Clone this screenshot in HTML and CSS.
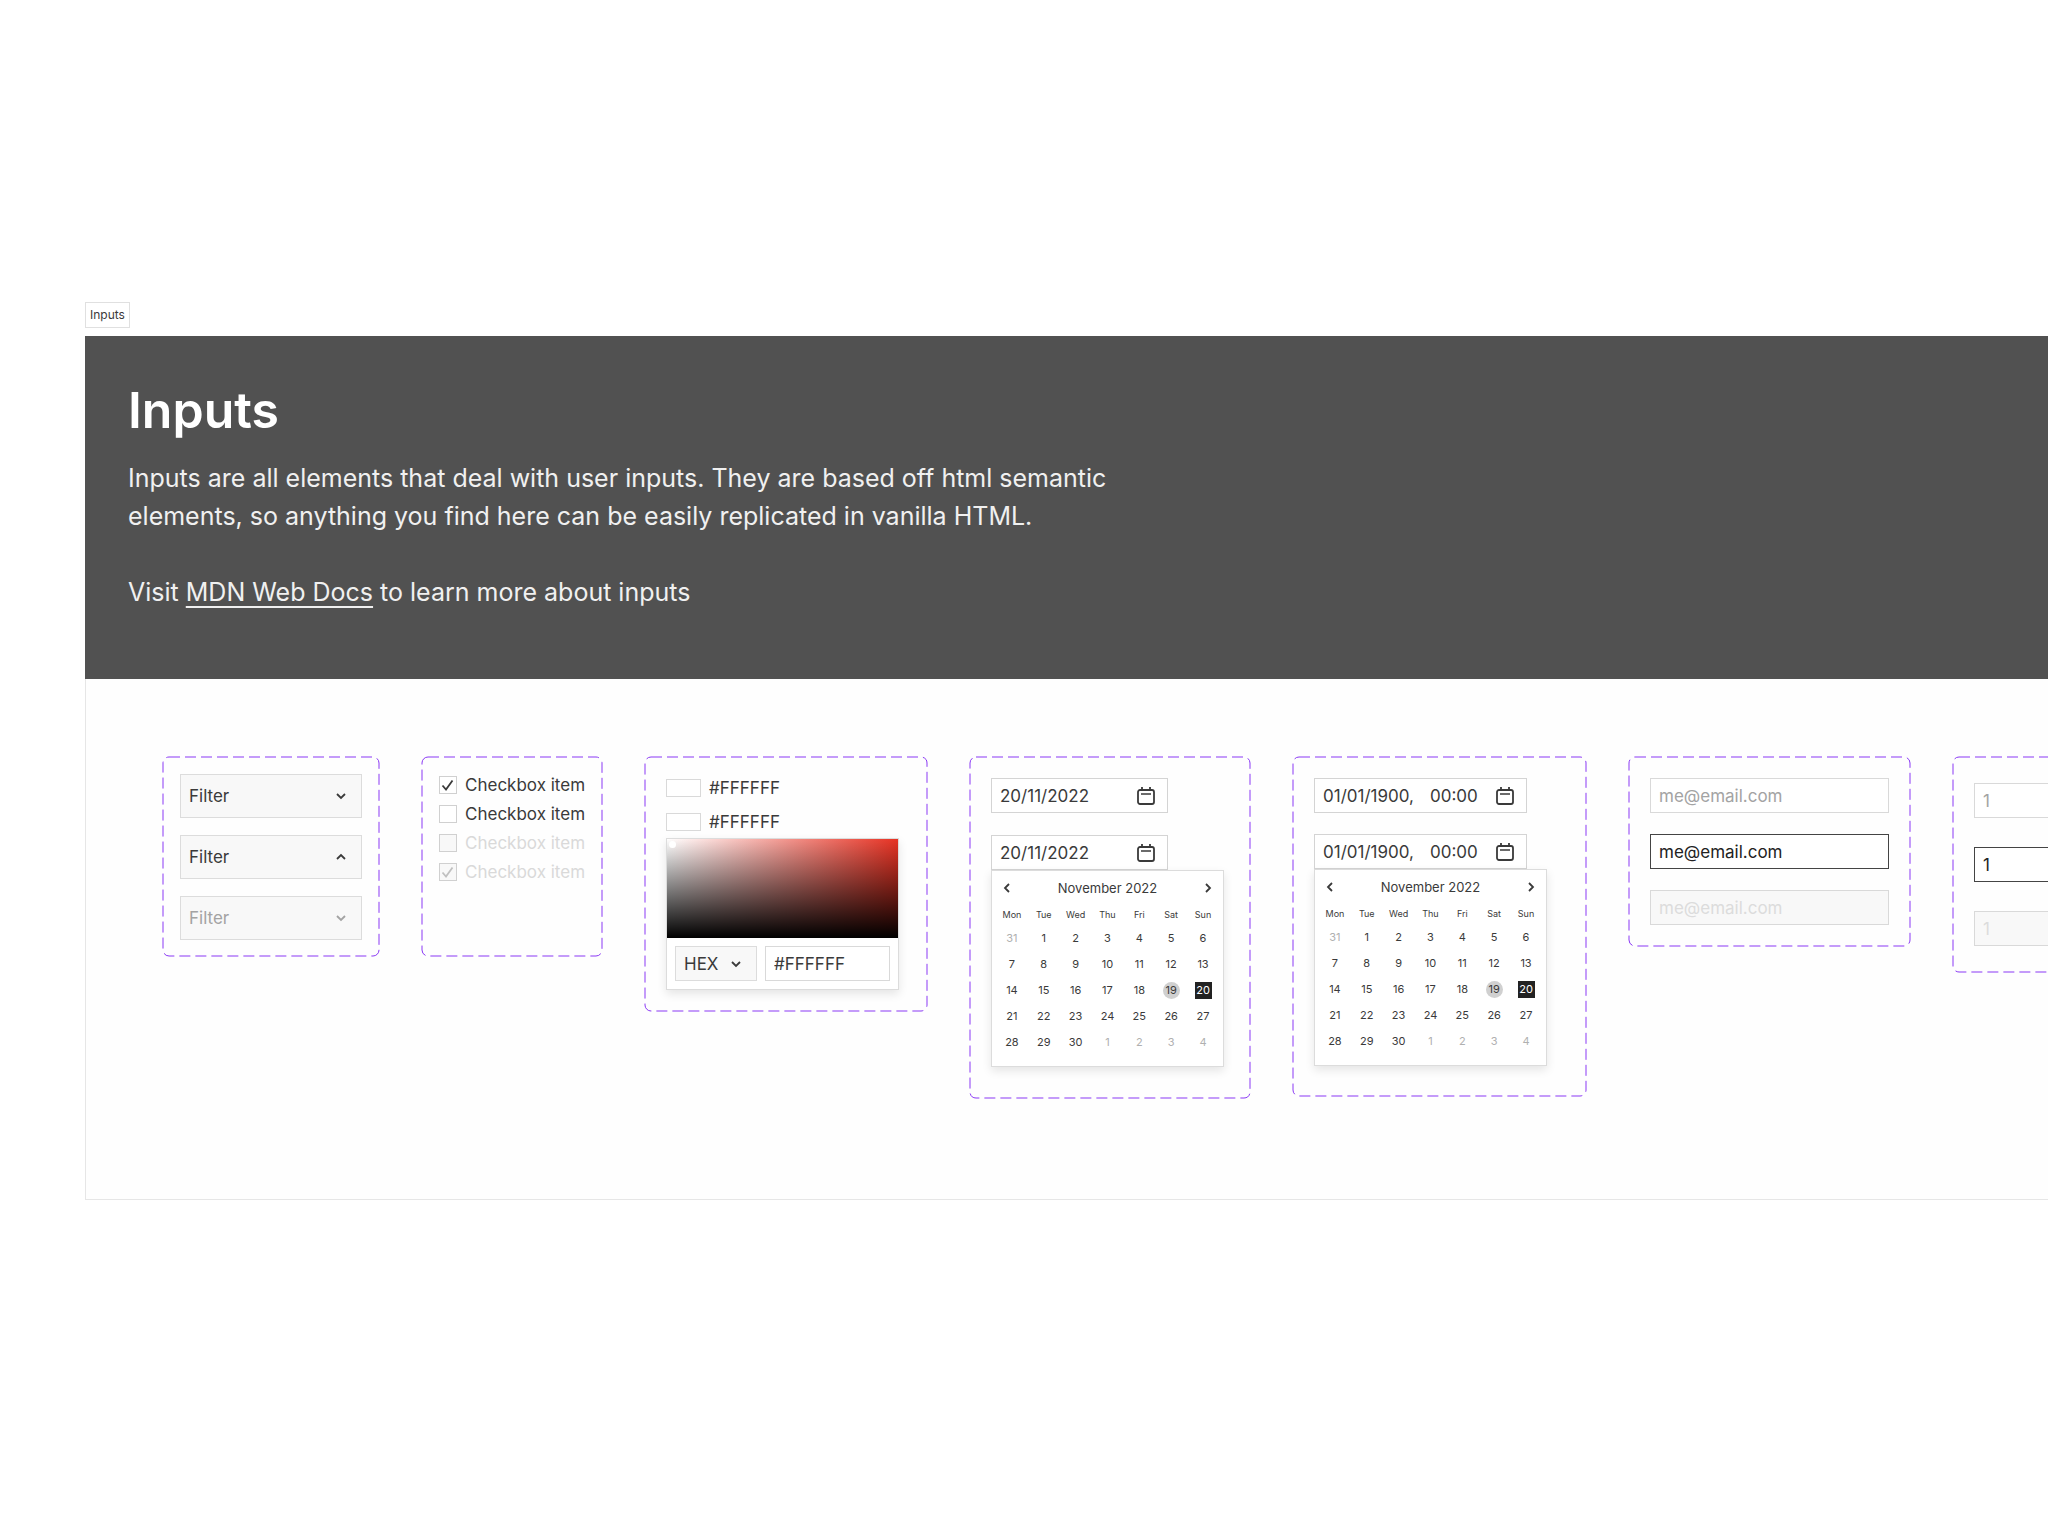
FILE: index.html
```html
<!DOCTYPE html>
<html lang="en">
<head>
    <meta charset="UTF-8">
    <meta name="viewport" content="width=device-width, initial-scale=1.0">
    <title>Inputs</title>
    <link rel="stylesheet" href="styles.css">
</head>
<body>
    <!-- shared icons -->
    <svg class="sprite" aria-hidden="true">
        <symbol id="chevron" viewBox="0 0 12 12">
            <path d="M2 4l4 4 4-4" fill="none" stroke="currentColor" stroke-width="1.8"/>
        </symbol>
        <symbol id="calendar" viewBox="0 0 20 20">
            <rect x="2" y="4" width="16" height="14" rx="2" fill="none" stroke="currentColor" stroke-width="1.8"/>
            <path d="M6 1v4M14 1v4" fill="none" stroke="currentColor" stroke-width="1.8"/>
            <path d="M5 8h10" fill="none" stroke="currentColor" stroke-width="1.5"/>
        </symbol>
        <symbol id="check" viewBox="0 0 18 18">
            <path d="M3.500 9.500l3.500 4 6.500-9" fill="none" stroke="currentColor" stroke-width="1.8"/>
        </symbol>
    </svg>

    <span class="tag">Inputs</span>

    <main class="board">
        <header class="intro">
            <h1>Inputs</h1>
            <p>Inputs are all elements that deal with user inputs. They are based off html semantic elements, so anything you find here can be easily replicated in vanilla HTML.</p>
            <p>Visit <a href="#">MDN Web Docs</a> to learn more about inputs</p>
        </header>

        <div class="cards">
            <section class="card card-select">
                <svg class="outline" aria-hidden="true"><rect width="100%" height="100%" rx="6"/></svg>
                <div class="select">
                    <select aria-label="Filter"><option>Filter</option></select>
                    <svg class="chevron"><use href="#chevron"/></svg>
                </div>
                <div class="select open">
                    <select aria-label="Filter, open"><option>Filter</option></select>
                    <svg class="chevron"><use href="#chevron"/></svg>
                </div>
                <div class="select disabled">
                    <select aria-label="Filter, disabled" disabled><option>Filter</option></select>
                    <svg class="chevron"><use href="#chevron"/></svg>
                </div>
            </section>

            <section class="card card-check">
                <svg class="outline" aria-hidden="true"><rect width="100%" height="100%" rx="6"/></svg>
                <label class="check">
                    <input type="checkbox" checked>
                    <svg><use href="#check"/></svg>
                    Checkbox item
                </label>
                <label class="check">
                    <input type="checkbox">
                    <svg><use href="#check"/></svg>
                    Checkbox item
                </label>
                <label class="check disabled">
                    <input type="checkbox" disabled>
                    <svg><use href="#check"/></svg>
                    Checkbox item
                </label>
                <label class="check disabled">
                    <input type="checkbox" checked disabled>
                    <svg><use href="#check"/></svg>
                    Checkbox item
                </label>
            </section>

            <section class="card card-color">
                <svg class="outline" aria-hidden="true"><rect width="100%" height="100%" rx="6"/></svg>
                <label class="color"><input type="color" value="#ffffff"> #FFFFFF</label>
                <label class="color"><input type="color" value="#ffffff"> #FFFFFF</label>
                <div class="picker popup">
                    <div class="spectrum"><span class="handle"></span></div>
                    <div class="picker-row">
                        <div class="select small">
                            <select aria-label="Format"><option>HEX</option></select>
                            <svg class="chevron"><use href="#chevron"/></svg>
                        </div>
                        <input class="field" type="text" value="#FFFFFF" aria-label="Hex value">
                    </div>
                </div>
            </section>

            <section class="card card-date">
                <svg class="outline" aria-hidden="true"><rect width="100%" height="100%" rx="6"/></svg>
                <div class="date">
                    <input class="field" type="text" value="20/11/2022" aria-label="Date">
                    <button type="button" aria-label="Open calendar"><svg><use href="#calendar"/></svg></button>
                </div>
                <div class="date">
                    <input class="field" type="text" value="20/11/2022" aria-label="Date, open">
                    <button type="button" aria-label="Close calendar"><svg><use href="#calendar"/></svg></button>
                </div>
                <div class="calendar popup"></div>
            </section>

            <section class="card card-datetime">
                <svg class="outline" aria-hidden="true"><rect width="100%" height="100%" rx="6"/></svg>
                <div class="date">
                    <input class="field day" type="text" value="01/01/1900," aria-label="Date">
                    <input class="field time" type="text" value="00:00" aria-label="Time">
                    <button type="button" aria-label="Open calendar"><svg><use href="#calendar"/></svg></button>
                </div>
                <div class="date">
                    <input class="field day" type="text" value="01/01/1900," aria-label="Date, open">
                    <input class="field time" type="text" value="00:00" aria-label="Time, open">
                    <button type="button" aria-label="Close calendar"><svg><use href="#calendar"/></svg></button>
                </div>
                <div class="calendar popup"></div>
            </section>

            <section class="card card-email">
                <svg class="outline" aria-hidden="true"><rect width="100%" height="100%" rx="6"/></svg>
                <input class="field" type="email" placeholder="me@email.com" aria-label="Email">
                <input class="field active" type="email" value="me@email.com" aria-label="Email, active">
                <input class="field" type="email" placeholder="me@email.com" aria-label="Email, disabled" disabled>
            </section>

            <section class="card card-number">
                <svg class="outline" aria-hidden="true"><rect width="100%" height="100%" rx="6"/></svg>
                <input class="field" type="number" placeholder="1" aria-label="Number">
                <input class="field active" type="number" value="1" aria-label="Number, active">
                <input class="field" type="number" placeholder="1" aria-label="Number, disabled" disabled>
            </section>
        </div>
    </main>

    <script>
        const weekdays = ['Mon', 'Tue', 'Wed', 'Thu', 'Fri', 'Sat', 'Sun'];

        // November 2022 starts on a Tuesday, so one day of October comes first
        function dayCell(i) {
            let day = i;
            let name = '';
            if (i < 1) {
                day = 31;
                name = 'outside';
            } else if (i > 30) {
                day = i - 30;
                name = 'outside';
            } else if (i === 19) {
                name = 'today';
            } else if (i === 20) {
                name = 'selected';
            }
            return `<td><button type="button" class="${name}">${day}</button></td>`;
        }

        function renderCalendar(el) {
            let rows = '';
            for (let week = 0; week < 5; week++) {
                rows += '<tr>';
                for (let d = 0; d < 7; d++) {
                    rows += dayCell(week * 7 + d);
                }
                rows += '</tr>';
            }
            el.innerHTML = `
                <div class="month">
                    <button type="button" class="prev" aria-label="Previous month"><svg class="chevron"><use href="#chevron"/></svg></button>
                    <span>November 2022</span>
                    <button type="button" class="next" aria-label="Next month"><svg class="chevron"><use href="#chevron"/></svg></button>
                </div>
                <table>
                    <thead><tr>${weekdays.map(d => `<th>${d}</th>`).join('')}</tr></thead>
                    <tbody>${rows}</tbody>
                </table>`;
        }

        document.querySelectorAll('.calendar').forEach(renderCalendar);
    </script>
</body>
</html>
```
FILE: styles.css
```css
* {
    box-sizing: border-box;
}
body {
    margin: 0;
    padding: 302px 0 300px 85px;
    overflow-x: hidden;
    background-color: #fff;
    color: #3a3a3a;
    font-family: Inter, "Liberation Sans", sans-serif;
    font-size: 17px;
    line-height: 20px;
}
input, select, button {
    font: inherit;
    color: inherit;
    margin: 0;
}
button {
    display: flex;
    align-items: center;
    justify-content: center;
    padding: 0;
    border: none;
    background: none;
    cursor: pointer;
}
.sprite {
    display: none;
}
.tag {
    display: block;
    width: max-content;
    margin-bottom: 8px;
    padding: 3px 4px;
    border: 1px solid #e0e0e0;
    font-size: 12px;
    line-height: 18px;
}
.board {
    overflow: hidden;
}
.intro {
    padding: 42px 43px 68px;
    background-color: #515151;
    color: #fff;
    font-size: 25px;
    line-height: 38px;
}
.intro h1 {
    margin: 0 0 17px;
    font-size: 50px;
    font-weight: 600;
    line-height: 64px;
}
.intro p {
    max-width: 1010px;
    margin: 0 0 38px;
    color: #f0f0f0;
}
.intro p:last-child {
    margin-bottom: 0;
}
.intro a {
    color: inherit;
    text-decoration-thickness: 2px;
    text-underline-offset: 5px;
}

/* cards */
.cards {
    display: flex;
    align-items: flex-start;
    gap: 43px;
    padding: 78px 77px 101px;
    border: 1px solid #e6e6e6;
    border-width: 0 0 1px 1px;
    background-color: #fefefe;
}
.card {
    position: relative;
    flex: none;
    display: flex;
    flex-direction: column;
    align-items: flex-start;
}
.outline {
    position: absolute;
    inset: 0;
    width: 100%;
    height: 100%;
    overflow: visible;
    pointer-events: none;
}
.outline rect {
    fill: none;
    stroke: #8a38f5;
    stroke-width: 1px;
    stroke-dasharray: 11 5;
}
.card-select {
    width: 216px;
    height: 199px;
    gap: 17px;
    padding: 17px;
}
.card-check {
    width: 180px;
    height: 199px;
    gap: 9px;
    padding: 18px 17px;
}
.card-color {
    width: 282px;
    height: 254px;
    padding: 21px;
}
.card-date {
    width: 280px;
    height: 341px;
    padding: 21px;
}
.card-datetime {
    width: 293px;
    height: 339px;
    padding: 21px;
}
.card-email {
    width: 281px;
    gap: 21px;
    padding: 21px;
}
.card-number {
    width: 281px;
    gap: 29px;
    padding: 26px 21px;
}

/* fields */
.field {
    width: 100%;
    height: 35px;
    padding: 0 8px;
    border: 1px solid #d9d9d9;
    border-radius: 0;
    outline: none;
    background-color: #fff;
    appearance: none;
}
.field::placeholder {
    color: #a3a3a3;
    opacity: 1;
}
.field.active {
    border-color: #444;
    color: #222;
}
.field:disabled {
    background-color: #f8f8f8;
}
.field:disabled::placeholder {
    color: #dcdcdc;
}
.select {
    position: relative;
    width: 100%;
}
.select select {
    display: block;
    width: 100%;
    height: 44px;
    padding: 0 8px;
    border: 1px solid #dcdcdc;
    border-radius: 0;
    background-color: #f8f8f8;
    appearance: none;
    opacity: 1;
}
.chevron {
    display: block;
    width: 12px;
    height: 12px;
}
.select .chevron {
    position: absolute;
    top: 16px;
    right: 15px;
    pointer-events: none;
}
.select.open .chevron {
    transform: rotate(180deg);
}
.select.disabled {
    color: #a3a3a3;
}
.select.small {
    width: 82px;
    flex: none;
}
.select.small select {
    height: 35px;
}
.select.small .chevron {
    top: 12px;
}

/* checkboxes */
.check {
    position: relative;
    display: flex;
    align-items: center;
    gap: 8px;
    white-space: nowrap;
}
.check input {
    width: 18px;
    height: 18px;
    border: 1px solid #d0d0d0;
    background-color: #fff;
    appearance: none;
}
.check svg {
    position: absolute;
    left: 0;
    width: 18px;
    height: 18px;
    display: none;
}
.check input:checked + svg {
    display: block;
}
.check.disabled {
    color: #d9d9d9;
}
.check.disabled input {
    background-color: #f8f8f8;
}
.check.disabled svg {
    color: #c0c0c0;
}

/* colour picker */
.color {
    display: flex;
    align-items: center;
    gap: 8px;
    margin-bottom: 14px;
}
.color + .color {
    margin-bottom: 6px;
}
.color input {
    width: 35px;
    height: 18px;
    padding: 0;
    border: 1px solid #d9d9d9;
    background: none;
    appearance: none;
}
.color input::-webkit-color-swatch-wrapper {
    padding: 0;
}
.color input::-webkit-color-swatch {
    border: none;
}
.popup {
    width: 233px;
    border: 1px solid #dcdcdc;
    background-color: #fff;
    box-shadow: 0 4px 9px rgba(0, 0, 0, 0.1);
}
.spectrum {
    position: relative;
    height: 99px;
    background: linear-gradient(to top, #000, transparent), linear-gradient(to right, #fff, #e73324);
}
.handle {
    position: absolute;
    top: 2px;
    left: 2px;
    width: 7px;
    height: 7px;
    border-radius: 50%;
    background-color: #fff;
}
.picker-row {
    display: flex;
    gap: 8px;
    padding: 8px;
}

/* dates */
.date {
    display: flex;
    width: 177px;
    margin-bottom: 22px;
    border: 1px solid #d4d4d4;
    background-color: #fff;
}
.date + .date {
    margin-bottom: 0;
}
.date .field {
    height: 33px;
    border: none;
    background: none;
}
.date button {
    flex: none;
    width: 43px;
}
.date button svg {
    width: 20px;
    height: 20px;
}
.card-datetime .date {
    width: 213px;
    justify-content: space-between;
    margin-bottom: 21px;
}
.card-datetime .date + .date {
    margin-bottom: 0;
}
.card-datetime .day {
    width: 110px;
    padding-right: 0;
}
.card-datetime .time {
    width: 56px;
    padding: 0 0 0 4px;
}
.calendar {
    padding: 8px 4px 11px;
}
.month {
    display: flex;
    align-items: center;
    justify-content: space-between;
    padding: 0 5px;
    margin-bottom: 8px;
    font-size: 13px;
    line-height: 18px;
}
.prev .chevron {
    transform: rotate(90deg);
}
.next .chevron {
    transform: rotate(-90deg);
}
.calendar table {
    width: 100%;
    table-layout: fixed;
    border-collapse: collapse;
    font-size: 11px;
}
.calendar th {
    height: 20px;
    padding: 0;
    font-size: 9px;
    font-weight: 400;
    line-height: 12px;
}
.calendar td {
    height: 26px;
    padding: 0;
}
.calendar td button {
    width: 17px;
    height: 17px;
    margin: 0 auto;
}
.calendar .outside {
    color: #b0b0b0;
}
.calendar .today {
    border-radius: 50%;
    background-color: #d0d0d0;
}
.calendar .selected {
    background-color: #222;
    color: #fff;
}
```
